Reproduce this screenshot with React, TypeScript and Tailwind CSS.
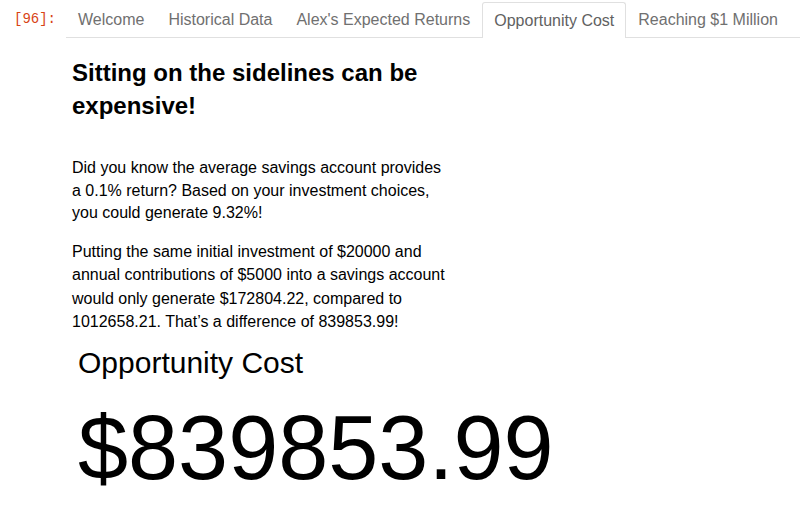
const tabs = [
    "Welcome",
    "Historical Data",
    "Alex's Expected Returns",
    "Opportunity Cost",
    "Reaching $1 Million",
];

const ACTIVE = "Opportunity Cost";

const Tab: React.FC<{ label: string; active: boolean }> = ({ label, active }) => {
    return (
        <div
            className={
                active
                    ? "h-[36px] px-[11px] flex items-center border border-b-0 border-[#e0e0e0] rounded-t-[3px] bg-white mb-[-1px] text-[#616161] whitespace-nowrap"
                    : "h-[36px] px-[11px] flex items-center border border-transparent border-b-0 text-[#707070] whitespace-nowrap"
            }
        >
            {label}
        </div>
    );
};

export default function App() {
    return (
        <div className="w-[800px] h-[522px] bg-white flex overflow-hidden font-['Liberation_Sans',Arial,sans-serif]">
            <div className="w-[66px] shrink-0 pl-[14px] pt-[11px] text-[14px] leading-[17px] text-[#d84315] font-['Liberation_Mono',monospace]">
                [96]:
            </div>
            <div className="flex-1 min-w-0 flex flex-col">
                <div className="h-[38px] flex items-end border-b border-[#e0e0e0] text-[16px]">
                    {tabs.map((t) => (
                        <Tab key={t} label={t} active={t === ACTIVE} />
                    ))}
                </div>
                <div className="pl-[6px] pt-[18px] w-[386px] text-black">
                    <h2 className="text-[24px] leading-[33px] font-bold">
                        Sitting on the sidelines can be expensive!
                    </h2>
                    <p className="mt-[35px] text-[16px] leading-[22.5px]">
                        Did you know the average savings account provides a 0.1% return? Based on your investment choices, you could generate 9.32%!
                    </p>
                    <p className="mt-[15px] text-[16px] leading-[23.5px]">
                        Putting the same initial investment of $20000 and annual contributions of $5000 into a savings account would only generate $172804.22, compared to 1012658.21. That’s a difference of 839853.99!
                    </p>
                </div>
                <div className="pl-[12px] pt-[12px] text-black">
                    <div className="text-[30px] leading-[34px]">Opportunity Cost</div>
                    <div className="mt-[18px] text-[90px] leading-[100px]">$839853.99</div>
                </div>
            </div>
        </div>
    );
}
